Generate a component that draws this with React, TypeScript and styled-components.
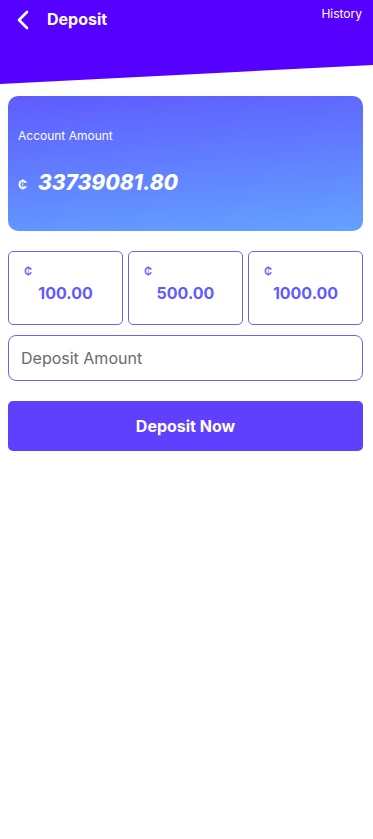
import styled, { createGlobalStyle } from 'styled-components';

const GlobalStyle = createGlobalStyle`
  body {
    margin: 0;
    background: #ffffff;
    font-family: Inter, "Noto Sans", sans-serif;
  }
`;

const QUICK_AMOUNTS = ['100.00', '500.00', '1000.00'];

const BackIcon = () => (
  <svg width="16" height="20" viewBox="0 0 16 20" fill="none">
    <path d="M12 2L4 10l8 8" stroke="#ffffff" strokeWidth="2.6" strokeLinecap="round" strokeLinejoin="round" />
  </svg>
);

const App = () => {
  return (
    <Page>
      <GlobalStyle />
      <Header>
        <TitleWrap>
          <BackBtn>
            <BackIcon />
          </BackBtn>
          <Title>Deposit</Title>
        </TitleWrap>
        <HistoryLink>History</HistoryLink>
      </Header>
      <Content>
        <BalanceCard>
          <BalanceLabel>Account Amount</BalanceLabel>
          <BalanceRow>
            <Currency>₵</Currency>
            <BalanceValue>33739081.80</BalanceValue>
          </BalanceRow>
        </BalanceCard>
        <QuickGrid>
          {QUICK_AMOUNTS.map(amount => (
            <QuickItem key={amount}>
              <QuickCurrency>₵</QuickCurrency>
              <QuickValue>{amount}</QuickValue>
            </QuickItem>
          ))}
        </QuickGrid>
        <AmountInput placeholder="Deposit Amount" />
        <SubmitBtn>Deposit Now</SubmitBtn>
      </Content>
    </Page>
  );
};

const Page = styled.div`
  min-height: 839px;
  background: #ffffff;
`;

const Header = styled.header`
  height: 85px;
  box-sizing: border-box;
  padding: 0 11px 0 15px;
  background: #5600ff;
  clip-path: polygon(0 0, 100% 0, 100% 65px, 0 84px);
  display: flex;
  justify-content: space-between;
  align-items: flex-start;
  color: #ffffff;
`;

const TitleWrap = styled.div`
  display: flex;
  align-items: center;
  height: 38px;
  gap: 16px;
`;

const BackBtn = styled.div`
  display: flex;
  align-items: center;
  margin-top: 1px;
`;

const Title = styled.h1`
  margin: 0;
  font-size: 16px;
  font-weight: 700;
`;

const HistoryLink = styled.span`
  margin-top: 6px;
  font-size: 12px;
`;

const Content = styled.main`
  padding: 11px 10px 0 8px;
  display: flex;
  flex-direction: column;
`;

const BalanceCard = styled.section`
  height: 135px;
  box-sizing: border-box;
  padding: 32px 10px 0;
  border-radius: 10px;
  background: linear-gradient(175deg, #5f5bff 0%, #63a2ff 100%);
  color: #ffffff;
  display: flex;
  flex-direction: column;
`;

const BalanceLabel = styled.div`
  font-size: 12px;
  line-height: 16px;
`;

const BalanceRow = styled.div`
  margin-top: 26px;
  display: flex;
  align-items: center;
  gap: 11px;
`;

const Currency = styled.span`
  font-size: 12px;
  font-weight: 700;
  margin-top: 3px;
`;

const BalanceValue = styled.span`
  font-size: 21px;
  font-weight: 800;
  font-style: italic;
`;

const QuickGrid = styled.div`
  margin-top: 20px;
  display: grid;
  grid-template-columns: repeat(3, 1fr);
  gap: 5px;
`;

const QuickItem = styled.div`
  height: 74px;
  box-sizing: border-box;
  border: 1px solid #6a62ff;
  border-radius: 5px;
  padding: 12px 15px 0;
  display: flex;
  flex-direction: column;
  color: #5f5bff;
`;

const QuickCurrency = styled.span`
  font-size: 11px;
  font-weight: 600;
`;

const QuickValue = styled.span`
  margin-top: 5px;
  text-align: center;
  font-size: 16px;
  font-weight: 700;
`;

const AmountInput = styled.input`
  margin-top: 10px;
  height: 46px;
  box-sizing: border-box;
  border: 1px solid #6a62ff;
  border-radius: 8px;
  padding: 0 12px;
  font-family: Inter, "Noto Sans", sans-serif;
  font-size: 16px;
  color: #333333;
  outline: none;
  &::placeholder {
    color: #6b6b6b;
  }
`;

const SubmitBtn = styled.button`
  margin-top: 20px;
  height: 50px;
  border: none;
  border-radius: 5px;
  background: #5f40ff;
  color: #ffffff;
  font-family: Inter, "Noto Sans", sans-serif;
  font-size: 16px;
  font-weight: 700;
`;

export default App;
